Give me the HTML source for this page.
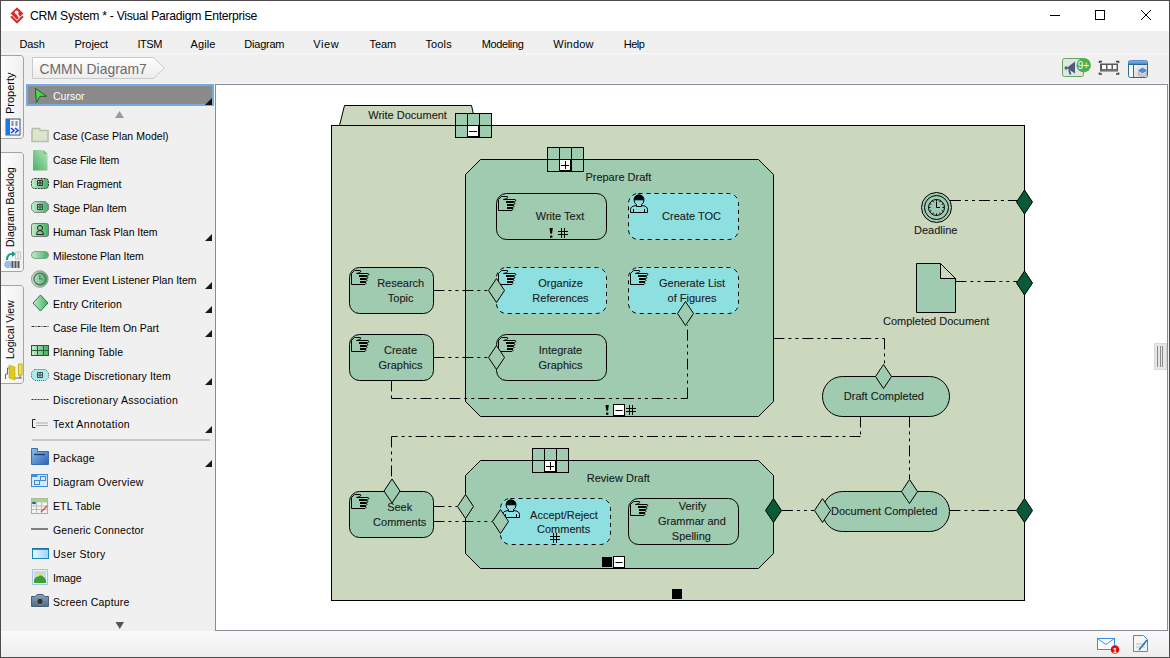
<!DOCTYPE html>
<html><head><meta charset="utf-8">
<style>
*{margin:0;padding:0;box-sizing:border-box}
html,body{width:1170px;height:658px;overflow:hidden;background:#f0f0f0;font-family:"Liberation Sans",sans-serif}
.a{position:absolute}
.menu{position:absolute;top:38px;font-size:11px;color:#000;white-space:nowrap;line-height:12px}
.pal{position:absolute;left:53px;font-size:10.5px;color:#000;white-space:nowrap;line-height:12px}
.tab{position:absolute;left:1px;width:23px;border:1px solid #a8a8a8;border-left:none;border-radius:0 5px 5px 0;background:linear-gradient(90deg,#fcfcfc,#f1f1f1)}
.vt{position:absolute;transform:rotate(-90deg);transform-origin:0 0;font-size:10.5px;color:#000;white-space:nowrap;line-height:12px}
svg{position:absolute;left:0;top:0}
svg text{font-family:"Liberation Sans",sans-serif}
</style></head><body>

<div class="a" style="left:0;top:0;width:1170px;height:658px;background:#f0f0f0"></div>
<div class="a" style="left:1px;top:1px;width:1168px;height:30px;background:#fff"></div>
<div class="a" style="left:30px;top:9px;font-size:12.2px;letter-spacing:-0.27px;color:#000;white-space:nowrap;line-height:14px">CRM System * - Visual Paradigm Enterprise</div>
<div class="menu" style="left:19.5px;letter-spacing:-0.106px">Dash</div>
<div class="menu" style="left:74.6px;letter-spacing:-0.112px">Project</div>
<div class="menu" style="left:137.4px;letter-spacing:-0.45px">ITSM</div>
<div class="menu" style="left:190.5px;letter-spacing:0.097px">Agile</div>
<div class="menu" style="left:244.3px;letter-spacing:-0.222px">Diagram</div>
<div class="menu" style="left:313.3px;letter-spacing:0.55px">View</div>
<div class="menu" style="left:369.5px;letter-spacing:-0.099px">Team</div>
<div class="menu" style="left:425.4px;letter-spacing:0.155px">Tools</div>
<div class="menu" style="left:481.8px;letter-spacing:-0.377px">Modeling</div>
<div class="menu" style="left:553.3px;letter-spacing:0.216px">Window</div>
<div class="menu" style="left:623.8px;letter-spacing:-0.541px">Help</div>
<svg width="30" height="400" style="position:absolute;left:0;top:0"><defs><linearGradient id="tg" x1="0" y1="0" x2="1" y2="0"><stop offset="0" stop-color="#fdfdfd"/><stop offset="1" stop-color="#efefef"/></linearGradient></defs><path d="M1,55.5 H21.5 L23.5,57.5 V136.5 L21.5,138.5 H1" fill="url(#tg)" stroke="#a4a4a4"/><path d="M1,152.5 H21.5 L23.5,154.5 V269.5 L21.5,271.5 H1" fill="url(#tg)" stroke="#a4a4a4"/><path d="M1,285.5 H21.5 L23.5,287.5 V381.5 L21.5,383.5 H1" fill="url(#tg)" stroke="#a4a4a4"/></svg>
<div class="vt" style="left:4px;top:114px;font-size:11px">Property</div>
<div class="vt" style="left:4px;top:247px">Diagram Backlog</div>
<div class="vt" style="left:4px;top:359px">Logical View</div>
<div class="a" style="left:1px;top:53px;width:1168px;height:1px;background:#f8f8f8"></div>
<div class="a" style="left:26px;top:83px;width:1142px;height:1px;background:#f6f6f6"></div>
<div class="a" style="left:215px;top:84px;width:953px;height:547px;background:#fff;border:1px solid #878d96"></div>
<div class="a" style="left:1px;top:631px;width:1168px;height:26px;background:linear-gradient(#fafafa,#ededed)"></div>
<div class="a" style="left:26px;top:84px;width:188px;height:22px;background:#8a8a8a;border:2px solid #76aae2"></div>
<div class="pal" style="top:90px;color:#fff">Cursor</div>
<div class="pal" style="top:130px;letter-spacing:0.058px">Case (Case Plan Model)</div>
<div class="pal" style="top:154px;letter-spacing:-0.106px">Case File Item</div>
<div class="pal" style="top:178px;letter-spacing:-0.03px">Plan Fragment</div>
<div class="pal" style="top:202px;letter-spacing:-0.079px">Stage Plan Item</div>
<div class="pal" style="top:226px;letter-spacing:-0.044px">Human Task Plan Item</div>
<div class="pal" style="top:250px;letter-spacing:-0.078px">Milestone Plan Item</div>
<div class="pal" style="top:274px;letter-spacing:-0.005px">Timer Event Listener Plan Item</div>
<div class="pal" style="top:298px;letter-spacing:0.129px">Entry Criterion</div>
<div class="pal" style="top:322px;letter-spacing:-0.042px">Case File Item On Part</div>
<div class="pal" style="top:346px;letter-spacing:0.101px">Planning Table</div>
<div class="pal" style="top:370px;letter-spacing:0.119px">Stage Discretionary Item</div>
<div class="pal" style="top:394px;letter-spacing:0.309px">Discretionary Association</div>
<div class="pal" style="top:418px;letter-spacing:0.35px">Text Annotation</div>
<div class="pal" style="top:452px;letter-spacing:0.107px">Package</div>
<div class="pal" style="top:476px;letter-spacing:0.27px">Diagram Overview</div>
<div class="pal" style="top:500px;letter-spacing:0.113px">ETL Table</div>
<div class="pal" style="top:524px;letter-spacing:0.18px">Generic Connector</div>
<div class="pal" style="top:548px;letter-spacing:0.29px">User Story</div>
<div class="pal" style="top:572px;letter-spacing:-0.17px">Image</div>
<div class="pal" style="top:596px;letter-spacing:0.22px">Screen Capture</div>
<svg width="1170" height="658" viewBox="0 0 1170 658">
<defs>
<linearGradient id="gG" x1="0" y1="0" x2="1" y2="0"><stop offset="0" stop-color="#c8ecd0"/><stop offset="1" stop-color="#3cb060"/></linearGradient>
<linearGradient id="gF" x1="0" y1="1" x2="1" y2="0"><stop offset="0" stop-color="#48b066"/><stop offset="1" stop-color="#b8e6bc"/></linearGradient>
<linearGradient id="gB" x1="0" y1="0" x2="1" y2="1"><stop offset="0" stop-color="#8cc0ee"/><stop offset="1" stop-color="#2a64b0"/></linearGradient>
<linearGradient id="gC" x1="0" y1="0" x2="1" y2="0"><stop offset="0" stop-color="#e8f6fe"/><stop offset="1" stop-color="#9cd4f4"/></linearGradient>
<linearGradient id="gS" x1="0" y1="0" x2="0" y2="1"><stop offset="0" stop-color="#8aa4c0"/><stop offset="1" stop-color="#4a6a90"/></linearGradient>
<linearGradient id="bc" x1="0" y1="0" x2="0" y2="1"><stop offset="0" stop-color="#fefefe"/><stop offset="1" stop-color="#ececec"/></linearGradient>
</defs>
<rect x="0.5" y="0.5" width="1169" height="657" fill="none" stroke="#4c4c4c"/>
<path d="M11,16.3 L17,22.3 L23,16.3" fill="none" stroke="#d22f2f" stroke-width="2.2"/><path d="M17,7 L23.7,13.5 L17,20 L10.3,13.5 Z" fill="#d22f2f" stroke="#fff" stroke-width=".5"/><circle cx="16.6" cy="12.3" r="1.9" fill="#fff"/><path d="M17,13.5 L19.3,17.3" stroke="#fff" stroke-width="1.6"/>
<path d="M1050,15.5 H1060" stroke="#000"/><rect x="1095.5" y="10.5" width="9" height="9" fill="none" stroke="#000"/><path d="M1141,10 L1151,20 M1151,10 L1141,20" stroke="#000"/>
<path d="M32.5,57.5 H153.5 L164.5,68 L153.5,78.5 H32.5 Z" fill="url(#bc)" stroke="#c9c9c9"/>
<text x="39.5" y="73.7" font-size="13.9" fill="#6b6b6b">CMMN Diagram7</text>
<rect x="1062.5" y="58.5" width="21" height="18" rx="2" fill="#e4e4e4" stroke="#62a85a"/>
<path d="M1066.5,68 L1075,61.5 V73.5 Z" fill="#4a5e7a"/><path d="M1066,66.5 v3" stroke="#4a5e7a" stroke-width="2.5"/><path d="M1069,70 L1070.5,74.5" stroke="#4a5e7a" stroke-width="1.8"/>
<circle cx="1083.7" cy="65.2" r="7.2" fill="#4cae4f"/><text x="1083.5" y="69" font-size="10" text-anchor="middle" fill="#fff">9+</text>
<rect x="1100" y="63.5" width="18" height="8" fill="#5a5a5a"/><rect x="1102" y="65" width="4" height="4" fill="#fff"/><rect x="1107.5" y="65" width="4" height="4" fill="#fff"/><rect x="1113" y="65" width="3.5" height="4" fill="#fff"/><path d="M1101,70.2 h16" stroke="#aaa" stroke-width=".6"/>
<path d="M1099.5,63 v-1.5 h2.5 M1116,61.5 h2.5 v1.5 M1099.5,72.5 v1.5 h2.5 M1116,74 h2.5 v-1.5" fill="none" stroke="#444" stroke-width="1.6"/>
<defs><linearGradient id="pH" x1="0" y1="0" x2="0" y2="1"><stop offset="0" stop-color="#8ab8ec"/><stop offset="1" stop-color="#2f78e0"/></linearGradient><linearGradient id="pR" x1="0" y1="0" x2="1" y2="1"><stop offset="0" stop-color="#f4f4f4"/><stop offset="1" stop-color="#d0d0d0"/></linearGradient></defs><rect x="1128.5" y="60.5" width="19" height="17" rx="2" fill="#fafafa" stroke="#2b6a90"/><rect x="1134" y="64" width="13" height="13" fill="url(#pR)"/><path d="M1128.5,65 v-2.5 q0,-2 2,-2 h15 q2,0 2,2 v2.5 z" fill="url(#pH)"/><path d="M1128.5,64.5 h19 M1133.5,64 v13.5" stroke="#2b6a90"/>
<path d="M1138,74.5 l4.5,-2.5 l4.5,2.5 l-4.5,2.5 z" fill="#ddd" stroke="#999" stroke-width=".6"/><path d="M1138,72.5 l4.5,-2.5 l4.5,2.5 l-4.5,2.5 z" fill="#e8e8e8" stroke="#999" stroke-width=".6"/><path d="M1138.5,70.5 l4,-2.5 l4,2.5 l-4,2.5 z" fill="#4a8ee8" stroke="#3a6ec8" stroke-width=".6"/>
<rect x="1097.5" y="638.5" width="17" height="11" fill="#fff" stroke="#3a8ee6"/><path d="M1097.5,638.5 l8.5,6 l8.5,-6" fill="none" stroke="#3a8ee6"/>
<circle cx="1115" cy="649.5" r="4.3" fill="#e01010"/><text x="1115" y="652.5" font-size="7" text-anchor="middle" fill="#fff" font-weight="bold">1</text>
<path d="M1133.5,635.5 h10 l4,4 v12 h-14 z" fill="#f4f6f8" stroke="#3a8ee6"/><path d="M1136,644 h9 M1136,647 h9" stroke="#bbb"/><path d="M1139,650 l8,-10" stroke="#1a7ab8" stroke-width="1.5"/>
<rect x="1154.5" y="343.5" width="12" height="26" fill="#e6e6e6" stroke="#d8d8d8"/><path d="M1157.5,346 v21 M1160.5,346 v21 M1162.5,346 v21" stroke="#8a8a8a"/>
<rect x="6" y="119" width="14" height="16" fill="#f4f6fa" stroke="#44556a" stroke-width="1"/><rect x="6" y="119" width="4" height="16" fill="#1a7ae0"/><path d="M12.5,121 v5 M16.5,121 v5" stroke="#8090a8" stroke-width="2"/><path d="M11,128 l3,2.5 l-3,2.5 M15,128 l3,2.5 l-3,2.5" fill="none" stroke="#1a4ad0" stroke-width="1.6"/>
<path d="M7,260 q0,-7 7,-6" fill="none" stroke="#1a9a80" stroke-width="2"/><path d="M12,251 l4,3 l-4,3 z" fill="#1a9a80"/><circle cx="8" cy="264.5" r="3.3" fill="#9cc0ea" stroke="#7aa0d8" stroke-width=".6"/><path d="M12.5,261 v7 M15.5,261 v7 M18.5,261 v7" stroke="#555" stroke-width="2"/><path d="M15.5,252 h5 v7 h-5 z M18,252 v7" fill="none" stroke="#c8c8c8"/>
<path d="M5.5,379 v-5 h2 v-6 h2 M14,378 h8 M20,375 v3" fill="none" stroke="#666" stroke-width="1"/><path d="M9,365 l6,2 v13 l-6,-2 z" fill="#e0c820" stroke="#c4a800" stroke-width=".6"/><path d="M18.5,364 h3.5 v11 h-3.5 z" fill="#f0e070" stroke="#c8b000" stroke-width="1"/>
<path d="M115,118 L119.5,111 L124,118 Z" fill="#9a9a9a"/>
<path d="M115.5,622 L124,622 L119.75,629 Z" fill="#555"/>
<path d="M32,440 H210" stroke="#c8c8c8" stroke-width="2"/>
<path d="M35.3,88.3 L46.6,96.3 L40,96.3 L36.4,102.5 Z" fill="#4cd84c" stroke="#2a5a2a" stroke-width="1" stroke-linejoin="round"/>
<path d="M205,105 L212,98 V105 Z" fill="#111"/>
<path d="M32.5,128.5 h7 l1,2 h7.5 v11 h-16 v-11 z" fill="#dae4ce" stroke="#b3c2a3" stroke-width="1.6"/>
<path d="M33,150 h10.5 l4,4 v16.5 h-14.5 z" fill="url(#gF)"/><path d="M43.5,150 v4 h4 z" fill="#6cc482"/>
<rect x="31.5" y="178.5" width="17" height="10" rx="3" fill="url(#gG)" stroke="#333" stroke-dasharray="2 1"/><path d="M37.5,180.5 h5 v5 h-5 z M40,180.5 v5 M37.5,183 h5" fill="none" stroke="#333" stroke-width="1"/>
<path d="M34.5,201.5 h11 l3,3 v5 l-3,3 h-11 l-3,-3 v-5 z" fill="url(#gG)" stroke="#888"/><path d="M37.5,204.5 h5 v5 h-5 z M40,204.5 v5 M37.5,207 h5" fill="none" stroke="#444"/>
<rect x="31.5" y="223.5" width="17" height="13" rx="2" fill="url(#gG)" stroke="#777"/><circle cx="40" cy="228" r="2.5" fill="none" stroke="#222"/><path d="M36.5,234.5 q0,-4 3.5,-4 q3.5,0 3.5,4 z" fill="none" stroke="#222"/>
<path d="M205,241 L212,234 V241 Z" fill="#1a1a1a"/>
<rect x="31.5" y="251.5" width="17" height="7" rx="3.5" fill="url(#gG)" stroke="#7aa98a"/>
<circle cx="39.8" cy="279" r="8.3" fill="url(#gG)" stroke="#9a9a9a"/><circle cx="39.8" cy="279" r="5.8" fill="none" stroke="#6a6a6a" stroke-width="1.4"/><path d="M39.8,275 v4 h3" fill="none" stroke="#6a6a6a" stroke-width="1.2"/>
<path d="M205,289 L212,282 V289 Z" fill="#1a1a1a"/>
<path d="M40.5,295 l7.5,8 l-7.5,8 l-7.5,-8 z" fill="url(#gG)" stroke="#1a7a4a"/>
<path d="M205,313 L212,306 V313 Z" fill="#1a1a1a"/>
<path d="M31.5,326.5 h17" stroke="#333" stroke-dasharray="3 1 1 1"/>
<path d="M205,337 L212,330 V337 Z" fill="#1a1a1a"/>
<rect x="31.5" y="345.5" width="17" height="10" fill="url(#gG)" stroke="#2a5a3a"/><path d="M37.5,345.5 v10 M43.5,345.5 v10 M31.5,350.5 h17" stroke="#2a5a3a"/>
<path d="M34.5,369.5 h11 l3,3 v5 l-3,3 h-11 l-3,-3 v-5 z" fill="#a8ecec" stroke="#557" stroke-dasharray="1 1"/><path d="M37.5,372.5 h5 v5 h-5 z M40,372.5 v5 M37.5,375 h5" fill="none" stroke="#444"/>
<path d="M205,385 L212,378 V385 Z" fill="#1a1a1a"/>
<path d="M31.5,399.5 h17" stroke="#333" stroke-dasharray="2 1"/>
<path d="M35.5,419.5 h-3 v8 h3" fill="none" stroke="#222"/><path d="M36,423 h12 M36,425.5 h12" stroke="#aaa"/>
<path d="M205,433 L212,426 V433 Z" fill="#1a1a1a"/>
<path d="M31.5,448.5 h6 v3 h11 v13 h-17 z" fill="url(#gB)" stroke="#3a6fb0"/><path d="M34,454.5 h11" stroke="#1c3c6c" stroke-width="1.3"/>
<path d="M205,467 L212,460 V467 Z" fill="#1a1a1a"/>
<rect x="31.5" y="474.5" width="16" height="12" fill="#d8e8f8" stroke="#3b8de0"/><rect x="34.5" y="480.5" width="5" height="4" fill="none" stroke="#3b8de0"/><rect x="40.5" y="476.5" width="5" height="4" fill="none" stroke="#3b8de0"/><path d="M31.5,476 h6" stroke="#3b8de0" stroke-width="2"/>
<rect x="31.5" y="498.5" width="16" height="15" fill="#f4f4f4" stroke="#aaa"/><rect x="31.5" y="498.5" width="16" height="4" fill="#a6d48a"/><path d="M31.5,506 h16 M31.5,509.5 h16 M36.5,502.5 v11 M41.5,502.5 v11" stroke="#bbb"/><ellipse cx="34" cy="503" rx="2" ry="1.2" fill="#2b5ea8"/><path d="M41,512 l6,-6" stroke="#d04040" stroke-width="1.2"/>
<path d="M31,529 h17" stroke="#808080" stroke-width="2"/>
<rect x="32.5" y="548.5" width="16" height="10" fill="url(#gC)" stroke="#1a88b8"/><path d="M32.5,549 h16" stroke="#1a6a98" stroke-width="1.5"/>
<rect x="32.5" y="569.5" width="15" height="15" fill="#e8f0f8" stroke="#a8c4e0"/><rect x="34" y="571" width="12" height="12" fill="#c4daee"/><circle cx="39.5" cy="575.5" r="2.8" fill="#f4e430"/><path d="M34,583 V580 q1.5,-4 4.5,-3.5 q1,-1.5 3,-1 q3,1 4.5,4.5 v3 z" fill="#3aa234"/>
<path d="M31.5,596.5 h4 l1.5,-2 h6 l1.5,2 h4 v10 h-17 z" fill="url(#gS)" stroke="#4a5f78"/><circle cx="40" cy="601.5" r="3.2" fill="#333" stroke="#888"/>
<path d="M344.5,105.5 H471.5 L476,125.5 H339.5 Z" fill="#ccd8be" stroke="#000"/>
<rect x="331.5" y="125.5" width="693" height="475" fill="#ccd8be" stroke="#000"/>
<text x="407.6" y="119" font-size="11" text-anchor="middle" fill="#1c1c1c" stroke="#1c1c1c" stroke-width="0.12">Write Document</text>
<rect x="455.5" y="113.5" width="36" height="24" fill="#9fcbb0" stroke="#000"/><path d="M467.5,113 v25 M479.5,113 v25 M455,125.5 h37" stroke="#000"/><rect x="468" y="126" width="10" height="10" fill="#fff"/><path d="M478.5,126 v11 M468,136.5 h11" stroke="#000" stroke-width="1"/><path d="M469,131.5 h8" stroke="#000"/>
<rect x="672" y="589" width="10" height="10" fill="#000"/>
<path d="M480.5,159.5 H758.5 L773.5,174.5 V401.5 L758.5,416.5 H480.5 L465.5,401.5 V174.5 Z" fill="#9fcbb0" stroke="#000" stroke-width="1"/>
<path d="M480.5,460.5 H758.5 L773.5,475.5 V553.5 L758.5,568.5 H480.5 L465.5,553.5 V475.5 Z" fill="#9fcbb0" stroke="#000" stroke-width="1"/>
<path d="M433.5,290.5 L488,290.5" fill="none" stroke="#000" stroke-width="1" stroke-dasharray="10.93 4 3 4 3 4"/>
<path d="M433.5,357.5 L488,357.5" fill="none" stroke="#000" stroke-width="1" stroke-dasharray="10.93 4 3 4 3 4"/>
<path d="M391.5,380.5 L391.5,398.5" fill="none" stroke="#000" stroke-width="1" stroke-dasharray="10.93 4 3 4 3 4"/><path d="M391.5,398.5 L687.5,398.5" fill="none" stroke="#000" stroke-width="1" stroke-dasharray="10.93 4 3 4 3 4"/><path d="M687.5,398.5 L687.5,325" fill="none" stroke="#000" stroke-width="1" stroke-dasharray="10.93 4 3 4 3 4"/>
<path d="M773.5,338.5 L884.5,338.5" fill="none" stroke="#000" stroke-width="1" stroke-dasharray="10.93 4 3 4 3 4"/><path d="M884.5,338.5 L884.5,364" fill="none" stroke="#000" stroke-width="1" stroke-dasharray="10.93 4 3 4 3 4"/>
<path d="M860.5,416.5 L860.5,436.5" fill="none" stroke="#000" stroke-width="1" stroke-dasharray="10.93 4 3 4 3 4"/><path d="M860.5,436.5 L391.5,436.5" fill="none" stroke="#000" stroke-width="1" stroke-dasharray="10.93 4 3 4 3 4"/><path d="M391.5,436.5 L391.5,479" fill="none" stroke="#000" stroke-width="1" stroke-dasharray="10.93 4 3 4 3 4"/>
<path d="M909.5,416.5 L909.5,479" fill="none" stroke="#000" stroke-width="1" stroke-dasharray="10.93 4 3 4 3 4"/>
<path d="M433.5,506.5 L457,506.5" fill="none" stroke="#000" stroke-width="1" stroke-dasharray="10.93 4 3 4 3 4"/>
<path d="M433.5,521.5 L492,521.5" fill="none" stroke="#000" stroke-width="1" stroke-dasharray="10.93 4 3 4 3 4"/>
<path d="M782,510.5 L814,510.5" fill="none" stroke="#000" stroke-width="1" stroke-dasharray="10.93 4 3 4 3 4"/>
<path d="M949.5,510.5 L1016,510.5" fill="none" stroke="#000" stroke-width="1" stroke-dasharray="10.93 4 3 4 3 4"/>
<path d="M950,200.5 L1018,200.5" fill="none" stroke="#000" stroke-width="1" stroke-dasharray="10.93 4 3 4 3 4"/>
<path d="M955.5,281.5 L1017,281.5" fill="none" stroke="#000" stroke-width="1" stroke-dasharray="10.93 4 3 4 3 4"/>
<rect x="547.5" y="147.5" width="36" height="24" fill="#9fcbb0" stroke="#000"/><path d="M559.5,147 v25 M571.5,147 v25 M547,159.5 h37" stroke="#000"/><rect x="560" y="160" width="10" height="10" fill="#fff"/><path d="M570.5,160 v11 M560,170.5 h11" stroke="#000" stroke-width="1"/><path d="M561,165.5 h8" stroke="#000"/><path d="M565.5,161 v8" stroke="#000"/>
<text x="618.4" y="181" font-size="11" text-anchor="middle" fill="#1c1c1c" stroke="#1c1c1c" stroke-width="0.12">Prepare Draft</text>
<path d="M605.5,405 h3.3 l-0.8,5.8 h-1.7 z" fill="#000"/><rect x="606.0" y="412.4" width="2.4" height="2.4" rx=".5" fill="#000"/><rect x="613.5" y="404.5" width="11" height="11" fill="#fff" stroke="#000"/><path d="M613,415.5 h12" stroke="#000"/><path d="M615.5,410.5 h7" stroke="#000"/><path d="M629.5,405 v10 M632.5,405 v10 M626,408.5 h10 M626,411.5 h10" stroke="#000" stroke-width="1"/>
<rect x="496.5" y="193.5" width="110" height="46" rx="10" ry="10" fill="#9fcbb0" stroke="#000" stroke-width="1"/>
<g transform="translate(496,193)" fill="none" stroke="#000" stroke-width="1" stroke-linejoin="round"><path d="M7.5,6.5 H19.2 L20,7.5 L18.6,8.6 M18.4,9.8 L19,10.6 L17.8,11.6 M17.6,12.8 L18,13.5 L17,14.5 M16.8,15.8 L17,16.4 L16,17.5 H2.5 V6.5 L5.5,3.5 H11.2 Q12.2,3.7 11.6,4.8 L10.4,5.7 L7.5,6.5"/><path d="M10,9 H18.5 M11,12 H17.8 M11,15 H17" stroke-width="2" stroke-linejoin="miter"/></g>
<text x="560" y="220" font-size="11" text-anchor="middle" fill="#1c1c1c" stroke="#1c1c1c" stroke-width="0.12">Write Text</text>
<path d="M549.5,228 h3.3 l-0.8,5.8 h-1.7 z" fill="#000"/><rect x="550.0" y="235.4" width="2.4" height="2.4" rx=".5" fill="#000"/><path d="M561.5,228 v10 M564.5,228 v10 M558,231.5 h10 M558,234.5 h10" stroke="#000" stroke-width="1"/>
<rect x="628.5" y="193.5" width="110" height="46" rx="10" ry="10" fill="#8ee0e0" stroke="#000" stroke-width="1" stroke-dasharray="4 4"/>
<g transform="translate(628,193)" fill="none" stroke="#000" stroke-width="1"><path d="M6,6.8 A5,5 0 0 1 16,6.8 Z" fill="#000"/><path d="M6,6.8 Q6,10.5 8.5,11.5 V13.5 H13.5 V11.5 Q16,10.5 16,6.8"/><path d="M8.5,12.5 Q2.5,13 2.5,16.5 V19.5 H19.5 V16.5 Q19.5,13 13.5,12.5 M5.5,16 V19.5 M16.5,16 V19.5"/></g>
<text x="691.5" y="220" font-size="11" text-anchor="middle" fill="#1c1c1c" stroke="#1c1c1c" stroke-width="0.12">Create TOC</text>
<rect x="496.5" y="267.5" width="110" height="46" rx="10" ry="10" fill="#8ee0e0" stroke="#000" stroke-width="1" stroke-dasharray="4 4"/>
<g transform="translate(496,267)" fill="none" stroke="#000" stroke-width="1" stroke-linejoin="round"><path d="M7.5,6.5 H19.2 L20,7.5 L18.6,8.6 M18.4,9.8 L19,10.6 L17.8,11.6 M17.6,12.8 L18,13.5 L17,14.5 M16.8,15.8 L17,16.4 L16,17.5 H2.5 V6.5 L5.5,3.5 H11.2 Q12.2,3.7 11.6,4.8 L10.4,5.7 L7.5,6.5"/><path d="M10,9 H18.5 M11,12 H17.8 M11,15 H17" stroke-width="2" stroke-linejoin="miter"/></g>
<text x="560.5" y="287" font-size="11" text-anchor="middle" fill="#1c1c1c" stroke="#1c1c1c" stroke-width="0.12">Organize</text>
<text x="560.5" y="302" font-size="11" text-anchor="middle" fill="#1c1c1c" stroke="#1c1c1c" stroke-width="0.12">References</text>
<rect x="628.5" y="267.5" width="110" height="46" rx="10" ry="10" fill="#8ee0e0" stroke="#000" stroke-width="1" stroke-dasharray="4 4"/>
<g transform="translate(628,267)" fill="none" stroke="#000" stroke-width="1" stroke-linejoin="round"><path d="M7.5,6.5 H19.2 L20,7.5 L18.6,8.6 M18.4,9.8 L19,10.6 L17.8,11.6 M17.6,12.8 L18,13.5 L17,14.5 M16.8,15.8 L17,16.4 L16,17.5 H2.5 V6.5 L5.5,3.5 H11.2 Q12.2,3.7 11.6,4.8 L10.4,5.7 L7.5,6.5"/><path d="M10,9 H18.5 M11,12 H17.8 M11,15 H17" stroke-width="2" stroke-linejoin="miter"/></g>
<text x="692" y="287" font-size="11" text-anchor="middle" fill="#1c1c1c" stroke="#1c1c1c" stroke-width="0.12">Generate List</text>
<text x="692" y="302" font-size="11" text-anchor="middle" fill="#1c1c1c" stroke="#1c1c1c" stroke-width="0.12">of Figures</text>
<rect x="496.5" y="334.5" width="110" height="46" rx="10" ry="10" fill="#9fcbb0" stroke="#000" stroke-width="1"/>
<g transform="translate(496,334)" fill="none" stroke="#000" stroke-width="1" stroke-linejoin="round"><path d="M7.5,6.5 H19.2 L20,7.5 L18.6,8.6 M18.4,9.8 L19,10.6 L17.8,11.6 M17.6,12.8 L18,13.5 L17,14.5 M16.8,15.8 L17,16.4 L16,17.5 H2.5 V6.5 L5.5,3.5 H11.2 Q12.2,3.7 11.6,4.8 L10.4,5.7 L7.5,6.5"/><path d="M10,9 H18.5 M11,12 H17.8 M11,15 H17" stroke-width="2" stroke-linejoin="miter"/></g>
<text x="560.5" y="354" font-size="11" text-anchor="middle" fill="#1c1c1c" stroke="#1c1c1c" stroke-width="0.12">Integrate</text>
<text x="560.5" y="369" font-size="11" text-anchor="middle" fill="#1c1c1c" stroke="#1c1c1c" stroke-width="0.12">Graphics</text>
<path d="M496.5,278.5 L504.5,290.5 L496.5,302.5 L488.5,290.5 Z" fill="#9fcbb0" stroke="#000" stroke-width="1"/>
<path d="M496.5,345.5 L504.5,357.5 L496.5,369.5 L488.5,357.5 Z" fill="#9fcbb0" stroke="#000" stroke-width="1"/>
<path d="M685.5,301.5 L693.5,313.5 L685.5,325.5 L677.5,313.5 Z" fill="#9fcbb0" stroke="#000" stroke-width="1"/>
<rect x="349.5" y="267.5" width="84" height="46" rx="10" ry="10" fill="#9fcbb0" stroke="#000" stroke-width="1"/>
<g transform="translate(349,267)" fill="none" stroke="#000" stroke-width="1" stroke-linejoin="round"><path d="M7.5,6.5 H19.2 L20,7.5 L18.6,8.6 M18.4,9.8 L19,10.6 L17.8,11.6 M17.6,12.8 L18,13.5 L17,14.5 M16.8,15.8 L17,16.4 L16,17.5 H2.5 V6.5 L5.5,3.5 H11.2 Q12.2,3.7 11.6,4.8 L10.4,5.7 L7.5,6.5"/><path d="M10,9 H18.5 M11,12 H17.8 M11,15 H17" stroke-width="2" stroke-linejoin="miter"/></g>
<text x="400.7" y="287" font-size="11" text-anchor="middle" fill="#1c1c1c" stroke="#1c1c1c" stroke-width="0.12">Research</text>
<text x="400.7" y="302" font-size="11" text-anchor="middle" fill="#1c1c1c" stroke="#1c1c1c" stroke-width="0.12">Topic</text>
<rect x="349.5" y="334.5" width="84" height="46" rx="10" ry="10" fill="#9fcbb0" stroke="#000" stroke-width="1"/>
<g transform="translate(349,334)" fill="none" stroke="#000" stroke-width="1" stroke-linejoin="round"><path d="M7.5,6.5 H19.2 L20,7.5 L18.6,8.6 M18.4,9.8 L19,10.6 L17.8,11.6 M17.6,12.8 L18,13.5 L17,14.5 M16.8,15.8 L17,16.4 L16,17.5 H2.5 V6.5 L5.5,3.5 H11.2 Q12.2,3.7 11.6,4.8 L10.4,5.7 L7.5,6.5"/><path d="M10,9 H18.5 M11,12 H17.8 M11,15 H17" stroke-width="2" stroke-linejoin="miter"/></g>
<text x="400.5" y="354" font-size="11" text-anchor="middle" fill="#1c1c1c" stroke="#1c1c1c" stroke-width="0.12">Create</text>
<text x="400.5" y="369" font-size="11" text-anchor="middle" fill="#1c1c1c" stroke="#1c1c1c" stroke-width="0.12">Graphics</text>
<rect x="349.5" y="491.5" width="84" height="46" rx="10" ry="10" fill="#9fcbb0" stroke="#000" stroke-width="1"/>
<g transform="translate(349,491)" fill="none" stroke="#000" stroke-width="1" stroke-linejoin="round"><path d="M7.5,6.5 H19.2 L20,7.5 L18.6,8.6 M18.4,9.8 L19,10.6 L17.8,11.6 M17.6,12.8 L18,13.5 L17,14.5 M16.8,15.8 L17,16.4 L16,17.5 H2.5 V6.5 L5.5,3.5 H11.2 Q12.2,3.7 11.6,4.8 L10.4,5.7 L7.5,6.5"/><path d="M10,9 H18.5 M11,12 H17.8 M11,15 H17" stroke-width="2" stroke-linejoin="miter"/></g>
<text x="399.7" y="511" font-size="11" text-anchor="middle" fill="#1c1c1c" stroke="#1c1c1c" stroke-width="0.12">Seek</text>
<text x="399.7" y="526" font-size="11" text-anchor="middle" fill="#1c1c1c" stroke="#1c1c1c" stroke-width="0.12">Comments</text>
<path d="M392,479 L400,491 L392,503 L384,491 Z" fill="#9fcbb0" stroke="#000" stroke-width="1"/>
<circle cx="936.5" cy="207.5" r="15" fill="#9fcbb0" stroke="#000"/>
<circle cx="936.5" cy="207.5" r="12" fill="#9fcbb0" stroke="#000"/>
<circle cx="936.5" cy="207.5" r="8" fill="#9fcbb0" stroke="#000"/>
<path d="M936.50,201.50 L936.50,199.70 M939.50,202.30 L940.40,200.75 M941.70,204.50 L943.25,203.60 M942.50,207.50 L944.30,207.50 M941.70,210.50 L943.25,211.40 M939.50,212.70 L940.40,214.25 M936.50,213.50 L936.50,215.30 M933.50,212.70 L932.60,214.25 M931.30,210.50 L929.75,211.40 M930.50,207.50 L928.70,207.50 M931.30,204.50 L929.75,203.60 M933.50,202.30 L932.60,200.75 " stroke="#000" stroke-width="1"/>
<path d="M936.5,202 V207.5 H940" fill="none" stroke="#000"/>
<text x="935.7" y="234" font-size="11" text-anchor="middle" fill="#1c1c1c" stroke="#1c1c1c" stroke-width="0.12">Deadline</text>
<path d="M916.5,263.5 H940.5 L955.5,278.5 V312.5 H916.5 Z" fill="#9fcbb0" stroke="#000"/>
<path d="M940.5,263.5 V278.5 H955.5 Z" fill="#ccd8be" stroke="#000"/>
<text x="936.2" y="325" font-size="11" text-anchor="middle" fill="#1c1c1c" stroke="#1c1c1c" stroke-width="0.12">Completed Document</text>
<rect x="822.5" y="376.5" width="127" height="40" rx="20" fill="#9fcbb0" stroke="#000"/>
<path d="M883.5,364.5 L891.5,376.5 L883.5,388.5 L875.5,376.5 Z" fill="#9fcbb0" stroke="#000" stroke-width="1"/>
<text x="883.9" y="400" font-size="11" text-anchor="middle" fill="#1c1c1c" stroke="#1c1c1c" stroke-width="0.12">Draft Completed</text>
<rect x="532.5" y="448.5" width="36" height="24" fill="#9fcbb0" stroke="#000"/><path d="M544.5,448 v25 M556.5,448 v25 M532,460.5 h37" stroke="#000"/><rect x="545" y="461" width="10" height="10" fill="#fff"/><path d="M555.5,461 v11 M545,471.5 h11" stroke="#000" stroke-width="1"/><path d="M546,466.5 h8" stroke="#000"/><path d="M550.5,462 v8" stroke="#000"/>
<text x="618.3" y="482" font-size="11" text-anchor="middle" fill="#1c1c1c" stroke="#1c1c1c" stroke-width="0.12">Review Draft</text>
<rect x="500.5" y="498.5" width="110" height="46" rx="10" ry="10" fill="#8ee0e0" stroke="#000" stroke-width="1" stroke-dasharray="4 4"/>
<g transform="translate(500,498)" fill="none" stroke="#000" stroke-width="1"><path d="M6,6.8 A5,5 0 0 1 16,6.8 Z" fill="#000"/><path d="M6,6.8 Q6,10.5 8.5,11.5 V13.5 H13.5 V11.5 Q16,10.5 16,6.8"/><path d="M8.5,12.5 Q2.5,13 2.5,16.5 V19.5 H19.5 V16.5 Q19.5,13 13.5,12.5 M5.5,16 V19.5 M16.5,16 V19.5"/></g>
<text x="564" y="519" font-size="11" text-anchor="middle" fill="#1c1c1c" stroke="#1c1c1c" stroke-width="0.12">Accept/Reject</text>
<text x="563.6" y="533" font-size="11" text-anchor="middle" fill="#1c1c1c" stroke="#1c1c1c" stroke-width="0.12">Comments</text>
<path d="M553.5,533 v10 M556.5,533 v10 M550,536.5 h10 M550,539.5 h10" stroke="#000" stroke-width="1"/>
<rect x="628.5" y="498.5" width="110" height="46" rx="10" ry="10" fill="#9fcbb0" stroke="#000" stroke-width="1"/>
<g transform="translate(628,498)" fill="none" stroke="#000" stroke-width="1" stroke-linejoin="round"><path d="M7.5,6.5 H19.2 L20,7.5 L18.6,8.6 M18.4,9.8 L19,10.6 L17.8,11.6 M17.6,12.8 L18,13.5 L17,14.5 M16.8,15.8 L17,16.4 L16,17.5 H2.5 V6.5 L5.5,3.5 H11.2 Q12.2,3.7 11.6,4.8 L10.4,5.7 L7.5,6.5"/><path d="M10,9 H18.5 M11,12 H17.8 M11,15 H17" stroke-width="2" stroke-linejoin="miter"/></g>
<text x="692.5" y="510" font-size="11" text-anchor="middle" fill="#1c1c1c" stroke="#1c1c1c" stroke-width="0.12">Verify</text>
<text x="691.9" y="525" font-size="11" text-anchor="middle" fill="#1c1c1c" stroke="#1c1c1c" stroke-width="0.12">Grammar and</text>
<text x="691.4" y="540" font-size="11" text-anchor="middle" fill="#1c1c1c" stroke="#1c1c1c" stroke-width="0.12">Spelling</text>
<rect x="602" y="557" width="10" height="10" fill="#000"/>
<rect x="613.5" y="556.5" width="11" height="11" fill="#fff" stroke="#000"/><path d="M613,567.5 h12" stroke="#000"/><path d="M615.5,562.5 h7" stroke="#000"/>
<path d="M465.5,494.5 L473.5,506.5 L465.5,518.5 L457.5,506.5 Z" fill="#9fcbb0" stroke="#000" stroke-width="1"/>
<path d="M500.5,509.5 L508.5,521.5 L500.5,533.5 L492.5,521.5 Z" fill="#9fcbb0" stroke="#000" stroke-width="1"/>
<path d="M773.5,498.5 L781.5,510.5 L773.5,522.5 L765.5,510.5 Z" fill="#085a38" stroke="#000" stroke-width="1"/>
<rect x="822.5" y="491.5" width="127" height="40" rx="20" fill="#9fcbb0" stroke="#000"/>
<path d="M909.5,479.5 L917.5,491.5 L909.5,503.5 L901.5,491.5 Z" fill="#9fcbb0" stroke="#000" stroke-width="1"/>
<path d="M822.5,498.5 L830.5,510.5 L822.5,522.5 L814.5,510.5 Z" fill="#9fcbb0" stroke="#000" stroke-width="1"/>
<text x="884.2" y="515" font-size="11" text-anchor="middle" fill="#1c1c1c" stroke="#1c1c1c" stroke-width="0.12">Document Completed</text>
<path d="M1024.5,190 L1032.5,202 L1024.5,214 L1016.5,202 Z" fill="#085a38" stroke="#000" stroke-width="1"/>
<path d="M1024.5,271 L1032.5,283 L1024.5,295 L1016.5,283 Z" fill="#085a38" stroke="#000" stroke-width="1"/>
<path d="M1024.5,498.5 L1032.5,510.5 L1024.5,522.5 L1016.5,510.5 Z" fill="#085a38" stroke="#000" stroke-width="1"/>
</svg>
</body></html>
